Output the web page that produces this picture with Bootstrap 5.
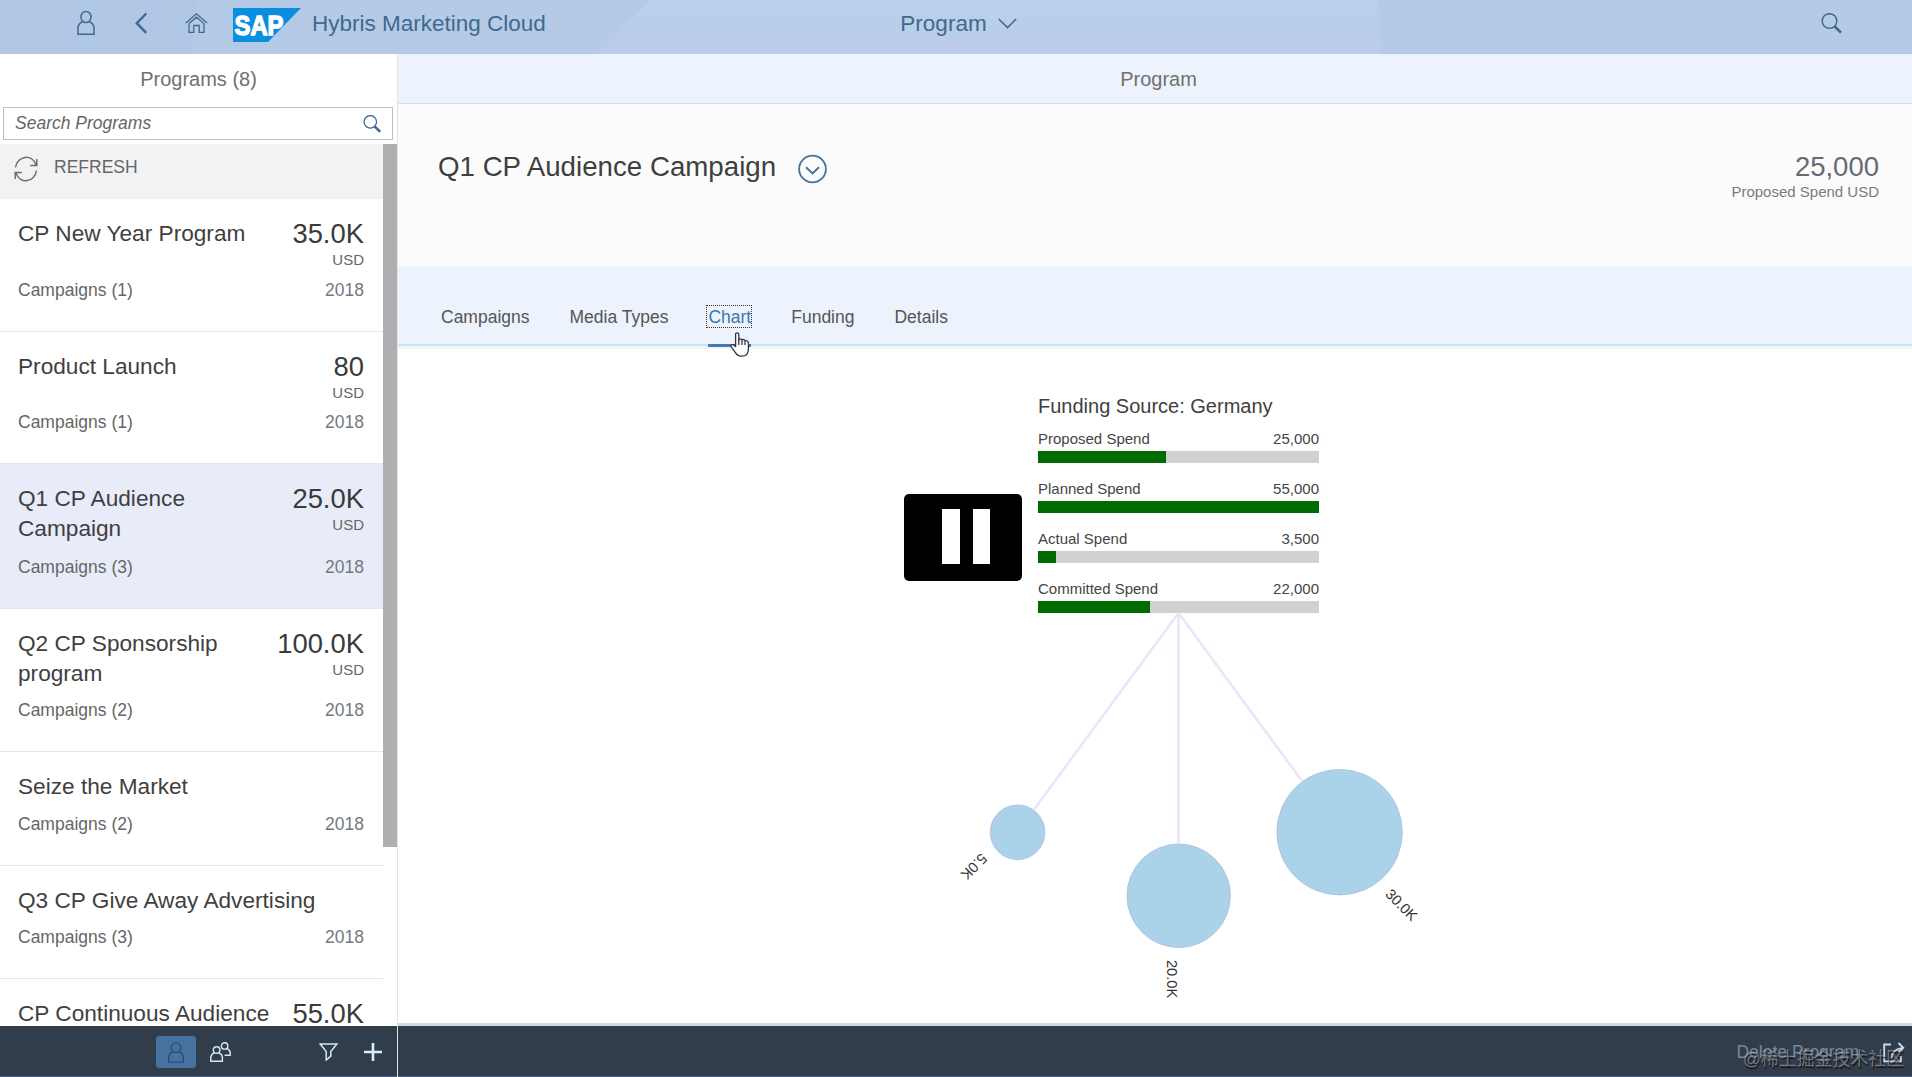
<!DOCTYPE html>
<html lang="en">
<head>
<meta charset="utf-8">
<meta name="viewport" content="width=device-width, initial-scale=1">
<title>Hybris Marketing Cloud</title>
<link href="https://cdn.jsdelivr.net/npm/bootstrap@5.3.0/dist/css/bootstrap.min.css" rel="stylesheet">
<style>
  body { font-family: "Liberation Sans", Arial, sans-serif; font-size: 17.5px; line-height: 20px; color: #666; }
  svg { display: block; flex: none; }
  .shell-bar { height: 54px; color: #40698f; font-size: 22.5px; line-height: 26px; padding: 0 70px 0 77px; }
  .shell-bg { inset: 0; }
  .shell-side { flex: 1 1 0; }
  .shell-icon { margin-top: 7px; }
  .icon-back { margin-left: 40px; }
  .icon-home { margin-left: 37px; }
  .logo { margin: 7px 0 0 25px; }
  .product { margin: 11px 0 0 11px; }
  .shell-title { gap: 11px; padding-top: 11px; left: -1px; }
  .shell-search { padding-top: 13px; }
  .fill-rest { min-height: 0; }
  .master { width: 398px; border-right: 1px solid #e3e3e6; }
  .pane-title { font-size: 20px; line-height: 24px; color: #707070; padding-top: 13px; }
  .master-title { height: 53px; }
  .search-box { margin: 0 4px 4px 3px; height: 33px; border: 1px solid #bfbfbf; padding: 0 11px; font-style: italic; }
  .search-box span { margin-top: -2px; }
  .refresh-row { height: 55px; background: #f2f1f4; padding: 12px 0 0 14px; gap: 16px; }
  .refresh-row span { padding-top: 1px; }
  .scroll-thumb { width: 14px; height: 703px; background: #b0aeb1; }
  .program { flex: none; border-bottom: 1px solid #e5e5e5; padding: 19px 19px 31px 18px; }
  .program.selected { background: #e8ecf8; }
  .h-133 { height: 133px; } .h-132 { height: 132px; } .h-145 { height: 145px; }
  .h-143 { height: 143px; } .h-114 { height: 114px; } .h-113 { height: 113px; }
  .program-name { font-size: 22.65px; line-height: 30px; color: #3f3f3f; }
  .amount { font-size: 27.4px; line-height: 30px; color: #3a3a3a; padding-top: 1px; }
  .unit { font-size: 15px; line-height: 18px; padding-top: 2px; }
  .year { color: #747980; }
  .foot { height: 51px; background: #313d4a; border-bottom: 1px solid #48648c; color: #d5e8fa; }
  .master-foot { padding: 2px 0 0 156px; }
  .toggle-on { width: 40px; height: 32px; border-radius: 3px; background: #4672a2; color: #2d4560; }
  .icon-group { margin-left: 14px; }
  .icon-filter { margin-left: 88px; }
  .icon-add { margin-left: 26px; }
  .detail-title { height: 50px; background: #edf3fc; border-bottom: 1px solid #cfdff1; padding-left: 7px; }
  .object-head { height: 163px; background: #fbfbfc; padding: 47px 33px 0 40px; }
  .object-name { font-size: 27.7px; line-height: 32px; color: #3f3f3f; }
  .object-menu { margin: 3px 0 0 22px; }
  .object-num { font-size: 27.5px; line-height: 32px; color: #666b73; }
  .object-unit { font-size: 15px; line-height: 18px; color: #777b82; }
  .tabs { height: 77px; background: #edf3fc; padding: 40px 43px 0; gap: 40px; color: #555; }
  .tabs-rule { height: 5px; background: linear-gradient(#d1e0ee 0 2.5px, #f0f4fc 2.5px); }
  .tab-current { color: #3f75ab; }
  .tab-focus { left: -2px; right: -1px; top: -2px; bottom: -1px; border: 1px dotted #333; }
  .tab-line { left: 0; right: 0; top: 37px; height: 3px; background: #427cac; }
  .cursor { left: 22px; top: 25px; }
  .spend-card { left: 640px; top: 45px; width: 281px; font-size: 15px; line-height: 18px; color: #444; }
  .spend-title { font-size: 20px; line-height: 24px; height: 36px; color: #404040; }
  .spend-row { height: 50px; }
  .spend-track { height: 12px; background: #d1d1d3; margin-top: 3px; }
  .spend-fill { height: 12px; background: #006b00; }
  .pause { left: 506px; top: 145px; width: 118px; height: 87px; border-radius: 5px; background: #000; padding: 15px 0 0 38px; gap: 13px; }
  .pause i { width: 17.5px; height: 55px; background: #fff; }
  .foot-rule { height: 3px; background: #cbdbe9; }
  .detail-foot { padding: 16px 7px 0 0; gap: 24px; }
  .delete-action { color: #76889e; }
  .watermark { right: 8px; bottom: 6px; font: 17.9px/22px "Liberation Sans", "Noto Sans CJK SC", sans-serif; color: rgba(190,190,190,.5); text-shadow: 1px 2px 1px rgba(0,0,0,.6); }
</style>
</head>
<body class="vh-100 overflow-hidden d-flex flex-column bg-white">

<header class="shell-bar position-relative d-flex flex-shrink-0">
  <svg class="shell-bg position-absolute" width="1912" height="54">
    <defs><linearGradient id="sky" x1="0" y1="0" x2="0" y2="1"><stop offset="0" stop-color="#b9cfea"/><stop offset=".65" stop-color="#b9cee9"/><stop offset=".8" stop-color="#bccdea"/><stop offset="1" stop-color="#bccdea"/></linearGradient></defs>
    <rect width="1912" height="54" fill="url(#sky)"/>
    <path d="M0 0H650L598 54H0Z" fill="#b5cae6"/>
    <path d="M0 0H198L190 54H0Z" fill="#b0c7e5"/>
    <path d="M1379 0H1912V54H1381Z" fill="#b5cae5"/>
  </svg>
  <div class="shell-side position-relative d-flex">
    <svg class="shell-icon" width="18" height="32" viewBox="0 0 18 32" fill="none" stroke="currentColor" stroke-width="1.5"><ellipse cx="9" cy="10" rx="5" ry="5.6"/><path d="M5.6 14.5Q1 17 1 21V27.2H17V21Q17 17 12.4 14.5"/></svg>
    <svg class="shell-icon icon-back" width="13" height="32" viewBox="0 0 13 32" fill="none" stroke="currentColor" stroke-width="2.4"><path d="M11.2 6.5L1.8 16.2L11.2 25.8"/></svg>
    <svg class="shell-icon icon-home" width="23" height="32" viewBox="0 0 23 32" fill="none" stroke="currentColor" stroke-width="1.3"><path d="M.8 16L11.5 6.8L22.2 16M4 16.5V25.3H8.8V18.5H14.2V25.3H19V16.5L11.5 10.2L4 16.5"/></svg>
    <svg class="logo" width="68" height="36" viewBox="0 0 68 36"><path d="M0 1H68L35 35H0Z" fill="#0a8fe0"/><text x="1.5" y="27.5" font-family="Liberation Sans, Arial, sans-serif" font-weight="700" font-size="28" textLength="49" lengthAdjust="spacingAndGlyphs" fill="#fff" stroke="#fff" stroke-width="1.4">SAP</text></svg>
    <span class="product">Hybris Marketing Cloud</span>
  </div>
  <div class="shell-title position-relative d-flex">
    <span>Program</span>
    <svg width="19" height="26" viewBox="0 0 19 26" fill="none" stroke="currentColor" stroke-width="1.5"><path d="M.8 8L9.5 16.6L18.2 8"/></svg>
  </div>
  <div class="shell-side shell-search position-relative d-flex justify-content-end">
    <svg width="21" height="21" viewBox="0 0 21 21" fill="none" stroke="currentColor"><circle cx="8.5" cy="8" r="7.3" stroke-width="1.5"/><path d="M13.5 13.2L20 19.6" stroke-width="2.6"/></svg>
  </div>
</header>

<div class="fill-rest d-flex flex-grow-1">
  <aside class="master d-flex flex-column flex-shrink-0">
    <div class="pane-title master-title text-center flex-shrink-0">Programs (8)</div>
    <div class="search-box d-flex align-items-center justify-content-between flex-shrink-0">
      <span>Search Programs</span>
      <svg width="18" height="18" viewBox="0 0 21 21" fill="none" stroke="#40698f"><circle cx="8.5" cy="8" r="7.3" stroke-width="1.5"/><path d="M13.5 13.2L20 19.6" stroke-width="3"/></svg>
    </div>
    <div class="fill-rest d-flex flex-grow-1 overflow-hidden">
      <div class="d-flex flex-column flex-grow-1">
        <div class="refresh-row d-flex flex-shrink-0">
          <svg width="24" height="26" viewBox="0 0 24 26" fill="none" stroke="#6e6e6e" stroke-width="1.5"><path d="M1.5 11.5C3 0 18 -3 22 9M22.8 3V9.6H16.2M22.5 14.5C21 26 6 29 2 17M1.2 23V16.4H7.8"/></svg>
          <span>REFRESH</span>
        </div>
        <div class="program h-133 d-flex flex-column justify-content-between">
          <div class="d-flex justify-content-between"><div class="program-name">CP New Year Program</div><div class="text-end"><div class="amount">35.0K</div><div class="unit">USD</div></div></div>
          <div class="d-flex justify-content-between"><span>Campaigns (1)</span><span class="year">2018</span></div>
        </div>
        <div class="program h-132 d-flex flex-column justify-content-between">
          <div class="d-flex justify-content-between"><div class="program-name">Product Launch</div><div class="text-end"><div class="amount">80</div><div class="unit">USD</div></div></div>
          <div class="d-flex justify-content-between"><span>Campaigns (1)</span><span class="year">2018</span></div>
        </div>
        <div class="program selected h-145 d-flex flex-column justify-content-between">
          <div class="d-flex justify-content-between"><div class="program-name">Q1 CP Audience<br>Campaign</div><div class="text-end"><div class="amount">25.0K</div><div class="unit">USD</div></div></div>
          <div class="d-flex justify-content-between"><span>Campaigns (3)</span><span class="year">2018</span></div>
        </div>
        <div class="program h-143 d-flex flex-column justify-content-between">
          <div class="d-flex justify-content-between"><div class="program-name">Q2 CP Sponsorship<br>program</div><div class="text-end"><div class="amount">100.0K</div><div class="unit">USD</div></div></div>
          <div class="d-flex justify-content-between"><span>Campaigns (2)</span><span class="year">2018</span></div>
        </div>
        <div class="program h-114 d-flex flex-column justify-content-between">
          <div class="program-name">Seize the Market</div>
          <div class="d-flex justify-content-between"><span>Campaigns (2)</span><span class="year">2018</span></div>
        </div>
        <div class="program h-113 d-flex flex-column justify-content-between">
          <div class="program-name">Q3 CP Give Away Advertising</div>
          <div class="d-flex justify-content-between"><span>Campaigns (3)</span><span class="year">2018</span></div>
        </div>
        <div class="program h-133 d-flex justify-content-between">
          <div class="program-name text-nowrap">CP Continuous Audience</div><div class="amount">55.0K</div>
        </div>
      </div>
      <div class="scroll-thumb flex-shrink-0"></div>
    </div>
    <div class="foot master-foot flex-shrink-0 d-flex align-items-center">
      <div class="toggle-on d-flex align-items-center justify-content-center">
        <svg width="16" height="21" viewBox="0 0 16 21" fill="none" stroke="currentColor" stroke-width="1.1"><circle cx="8" cy="5.6" r="4.9"/><path d="M5 9.8Q.7 11.5 .7 15V20.2H15.3V15Q15.3 11.5 11 9.8"/></svg>
      </div>
      <svg class="icon-group" width="21" height="20" viewBox="0 0 21 20" fill="none" stroke="currentColor" stroke-width="1.4"><circle cx="6.6" cy="8" r="3.3"/><path d="M4.2 10.8Q.8 12.5 .8 15.5V19.2H12.4V15.5Q12.4 12.5 9 10.8"/><circle cx="14.6" cy="3.9" r="3.2"/><path d="M17 6.7Q20.2 8 20.2 11V13.2H14.6"/></svg>
      <svg class="icon-filter" width="19" height="18" viewBox="0 0 19 18" fill="none" stroke="currentColor" stroke-width="1.5"><path d="M1.2 1H17.8L11.8 8.6V13.2L7.2 17V8.6Z"/></svg>
      <svg class="icon-add" width="18" height="18" viewBox="0 0 18 18" stroke="#d8edff" stroke-width="2.6"><path d="M9 0V18M0 9H18"/></svg>
    </div>
  </aside>

  <main class="d-flex flex-column flex-grow-1">
    <div class="pane-title detail-title text-center">Program</div>
    <div class="object-head d-flex justify-content-between">
      <div class="d-flex align-items-start">
        <div class="object-name">Q1 CP Audience Campaign</div>
        <svg class="object-menu" width="29" height="30" viewBox="0 0 29 30" fill="none" stroke="#4672a2"><circle cx="14.5" cy="15" r="13.4" stroke-width="1.8"/><path d="M8 13.2L14.5 19.4L21 13.2" stroke-width="2"/></svg>
      </div>
      <div class="text-end"><div class="object-num">25,000</div><div class="object-unit">Proposed Spend USD</div></div>
    </div>
    <nav class="tabs d-flex align-items-start">
      <span>Campaigns</span>
      <span>Media Types</span>
      <span class="tab-current position-relative">Chart
        <i class="tab-focus position-absolute"></i><i class="tab-line position-absolute"></i>
        <svg class="cursor position-absolute" width="20" height="25" viewBox="0 0 20 25" fill="#fff" stroke="#334" stroke-width="1.3" stroke-linejoin="round"><path d="M5.6 14V2.6Q5.6.8 7.2.8T8.8 2.6V8.2Q8.8 6.8 10.2 6.8T12 8.4Q12 7.4 13.4 7.5T15 9.2Q15.2 8.4 16.5 8.6T18.4 10.4V17Q18.4 24.2 12 24.2Q7.6 24.2 5.6 20.8L1 14.6Q.6 13 2 12.6T5.6 14.6Z"/><path d="M8.8 8V13M12 8.6V13M15 9.4V13" fill="none"/></svg>
      </span>
      <span>Funding</span>
      <span>Details</span>
    </nav>
    <div class="tabs-rule"></div>
    <section class="position-relative flex-grow-1">
      <svg class="position-absolute top-0 start-0" width="1514" height="674" viewBox="398 349 1514 674" font-family="Liberation Sans, Arial, sans-serif" font-size="14.6" fill="#333">
        <path d="M1178.5 613L1017.5 832M1178.5 613V896M1178.5 613L1339.5 832" stroke="#e8e6fb" stroke-width="2.6" fill="none"/>
        <g fill="#aad3e9" stroke="#b3c3e3" stroke-width="1"><circle cx="1017.6" cy="832.3" r="27.3"/><circle cx="1178.7" cy="895.8" r="51.7"/><circle cx="1339.6" cy="832.2" r="62.7"/></g>
        <text transform="translate(981 852.5) rotate(135)">5.0K</text>
        <text transform="translate(1166.5 960) rotate(90)">20.0K</text>
        <text transform="translate(1384.5 895) rotate(45)">30.0K</text>
      </svg>
      <div class="spend-card position-absolute">
        <div class="spend-title">Funding Source: Germany</div>
        <div class="spend-row"><div class="d-flex justify-content-between"><span>Proposed Spend</span><span>25,000</span></div><div class="spend-track"><div class="spend-fill" style="width:45.5%"></div></div></div>
        <div class="spend-row"><div class="d-flex justify-content-between"><span>Planned Spend</span><span>55,000</span></div><div class="spend-track"><div class="spend-fill" style="width:100%"></div></div></div>
        <div class="spend-row"><div class="d-flex justify-content-between"><span>Actual Spend</span><span>3,500</span></div><div class="spend-track"><div class="spend-fill" style="width:6.4%"></div></div></div>
        <div class="spend-row"><div class="d-flex justify-content-between"><span>Committed Spend</span><span>22,000</span></div><div class="spend-track"><div class="spend-fill" style="width:40%"></div></div></div>
      </div>
      <div class="pause position-absolute d-flex"><i></i><i></i></div>
    </section>
    <div class="foot-rule"></div>
    <div class="foot detail-foot flex-shrink-0 d-flex justify-content-end align-items-start position-relative">
      <span class="delete-action">Delete Program</span>
      <svg width="22" height="21" viewBox="0 0 22 21" fill="none" stroke="#c9dcf0" stroke-width="1.8"><path d="M8 2.5H1.2V19.3H17.8V14M8.5 16Q9 7 20 5.8M15.5 1L20.3 5.8L15.5 10.5"/></svg>
      <span class="watermark position-absolute">@稀土掘金技术社区</span>
    </div>
  </main>
</div>
<script src="https://cdn.jsdelivr.net/npm/bootstrap@5.3.0/dist/js/bootstrap.bundle.min.js"></script>
</body>
</html>
